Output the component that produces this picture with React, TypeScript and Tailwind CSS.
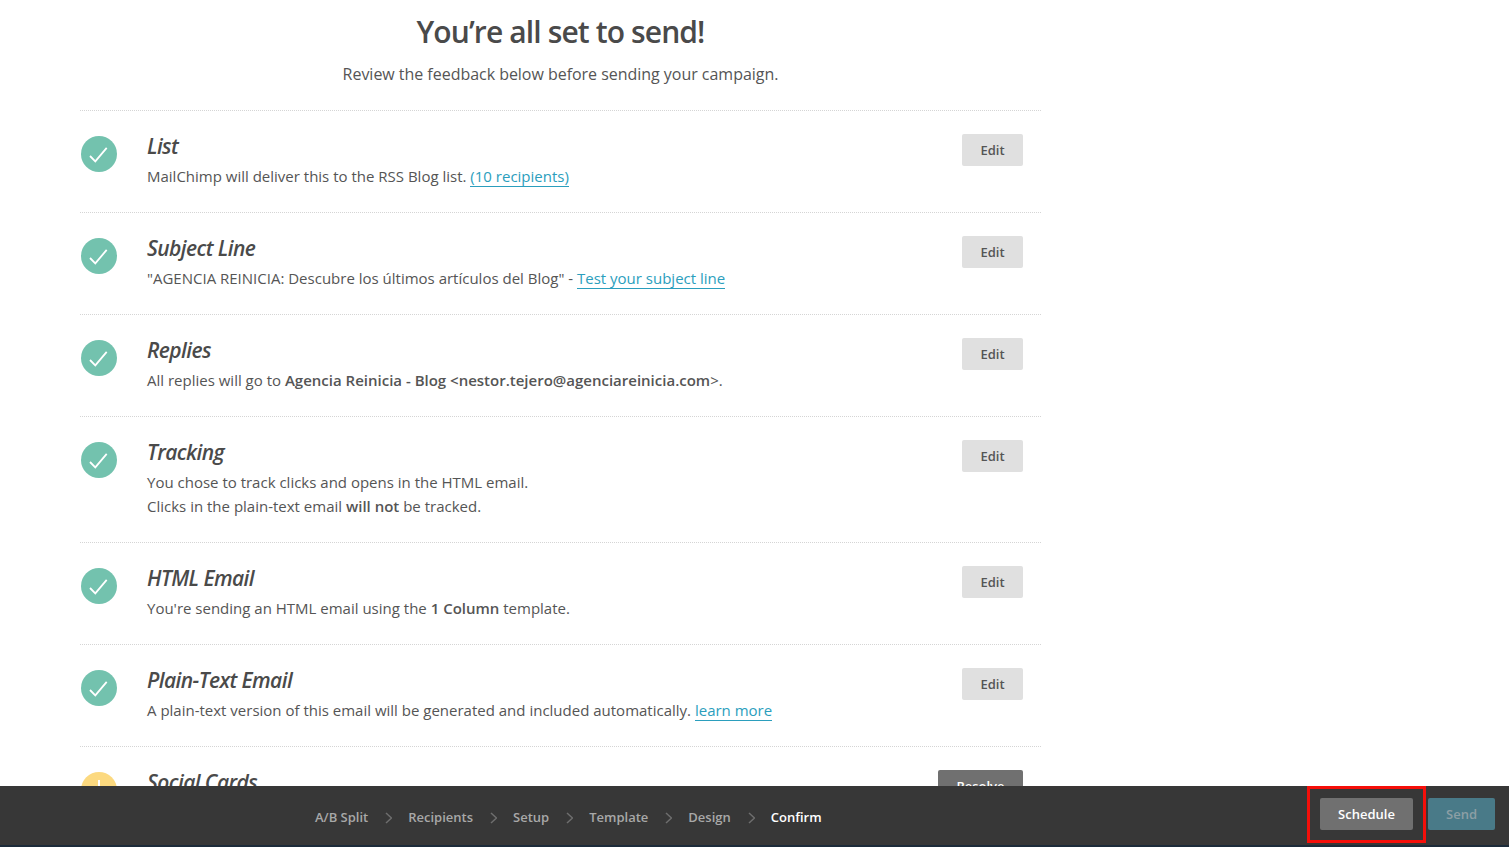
import React from "react";

const font = { fontFamily: '"Open Sans", "Noto Sans", sans-serif' };

function Check() {
  return (
    <div className="w-[36px] h-[36px] rounded-full bg-[#73c2ae] flex items-center justify-center shrink-0">
      <svg width="20" height="20" viewBox="0 0 20 20" fill="none">
        <path d="M1 12 L6.3 17.3 L17.7 3.9" stroke="#fff" strokeWidth="1.8" fill="none" />
      </svg>
    </div>
  );
}

function Warn() {
  return (
    <div className="w-[36px] h-[36px] rounded-full bg-[#fcd97f] flex justify-center shrink-0 pt-[8px]">
      <div className="w-[2px] h-[10px] bg-white" />
    </div>
  );
}

function Link({ children }: { children: React.ReactNode }) {
  return <a className="text-[#2b9ebd] border-b border-[#2b9ebd] pb-0">{children}</a>;
}

function Row({
  title,
  children,
  icon,
  action = "Edit",
  h = "h-[102px]",
}: {
  title: string;
  children?: React.ReactNode;
  icon?: React.ReactNode;
  action?: string;
  h?: string;
}) {
  return (
    <div className={`flex border-t border-dotted border-[#d5d5d5] ${h}`}>
      <div className="pt-[25px] pl-[0.7px] w-[67px] shrink-0">{icon ?? <Check />}</div>
      <div className="flex-1 pt-[19px]">
        <h3 className="text-[21px] leading-[32px] font-semibold italic text-[#4a4a4a] tracking-[-0.58px]">{title}</h3>
        <div className="text-[15px] leading-[24px] text-[#555] mt-[2px]">{children}</div>
      </div>
      <div className="pt-[23px] pr-[18px] shrink-0">
        {action === "Edit" ? (
          <button className="w-[61px] h-[32px] pt-[2px] rounded-[2px] bg-[#e0e0e0] text-[13px] font-semibold text-[#555]">Edit</button>
        ) : (
          <button className="w-[85px] h-[32px] pt-[2px] rounded-[2px] bg-[#707070] text-[13px] font-semibold text-white">{action}</button>
        )}
      </div>
    </div>
  );
}

function Chevron() {
  return (
    <svg width="8" height="12" viewBox="0 0 8 12" fill="none" className="shrink-0">
      <path d="M2 1 L7.5 6 L2 11" stroke="#6e6e6e" strokeWidth="1.5" fill="none" />
    </svg>
  );
}

export default function App() {
  const steps = ["A/B Split", "Recipients", "Setup", "Template", "Design"];
  return (
    <div className="relative w-[1509px] h-[847px] overflow-hidden bg-white" style={font}>
      <div className="w-[961px] ml-[80px]">
        <h1 className="h-[40px] box-content pt-[12px] text-[30px] leading-[40px] font-semibold text-[#4a4a4a] text-center tracking-[-0.88px]">
          You’re all set to send!
        </h1>
        <p className="text-[16px] leading-[24px] text-[#555] text-center mt-[10px] mb-[24px] tracking-[-0.03px]">
          Review the feedback below before sending your campaign.
        </p>
        <Row title="List">
          MailChimp will deliver this to the RSS Blog list. <Link>(10 recipients)</Link>
        </Row>
        <Row title="Subject Line">
          "AGENCIA REINICIA: Descubre los últimos artículos del Blog" - <Link>Test your subject line</Link>
        </Row>
        <Row title="Replies">
          All replies will go to <span className="font-semibold">Agencia Reinicia - Blog &lt;nestor.tejero@agenciareinicia.com</span>&gt;.
        </Row>
        <Row title="Tracking" h="h-[126px]">
          You chose to track clicks and opens in the HTML email.
          <br />
          Clicks in the plain-text email <span className="font-semibold">will not</span> be tracked.
        </Row>
        <Row title="HTML Email">
          You're sending an HTML email using the <span className="font-semibold">1 Column</span> template.
        </Row>
        <Row title="Plain-Text Email">
          A plain-text version of this email will be generated and included automatically. <Link>learn more</Link>
        </Row>
        <Row title="Social Cards" icon={<Warn />} action="Resolve" />
      </div>

      <div className="absolute left-0 right-0 top-[786px] h-[61px] bg-[#373737] border-b-2 border-[#1c2b3a]">
        <div className="flex items-center pl-[315px] h-[62px] pt-[2px] text-[13px] font-semibold text-[#a8a8a8]">
          {steps.map((s) => (
            <React.Fragment key={s}>
              <span>{s}</span>
              <span className="mx-[16px] flex items-center"><Chevron /></span>
            </React.Fragment>
          ))}
          <span className="text-white">Confirm</span>
        </div>
      </div>

      <button className="absolute left-[1320px] top-[798px] w-[93px] h-[32px] pt-[2px] rounded-[2px] bg-[#707070] text-[13px] font-semibold text-white">
        Schedule
      </button>
      <button className="absolute left-[1428px] top-[798px] w-[67px] h-[32px] pt-[2px] rounded-[2px] bg-[#497a88] text-[13px] font-semibold text-[#8c9fa5]">
        Send
      </button>
      <div className="absolute left-[1307px] top-[786px] w-[119px] h-[57px] border-[3px] border-[#f50f0a]" />
    </div>
  );
}
